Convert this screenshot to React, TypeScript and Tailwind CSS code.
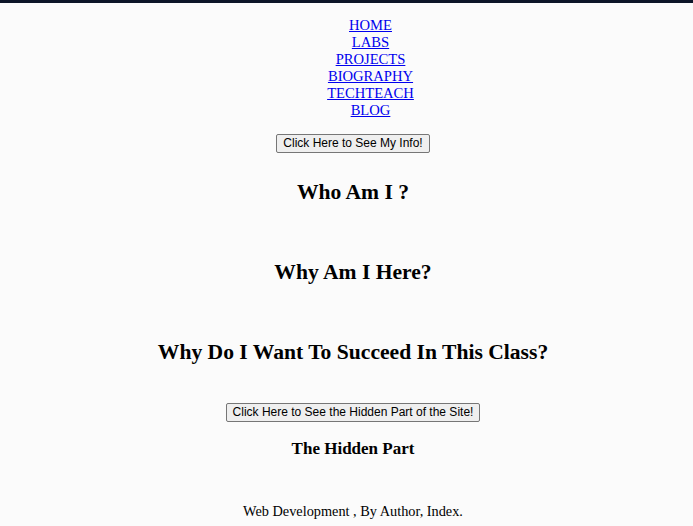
const links = ["HOME", "LABS", "PROJECTS", "BIOGRAPHY", "TECHTEACH", "BLOG"];

const questions = [
  "Who Am I ?",
  "Why Am I Here?",
  "Why Do I Want To Succeed In This Class?",
];

export default function App() {
  return (
    <div className="min-h-[526px] bg-[#fbfbfb] text-black font-['Liberation_Serif','Times_New_Roman',serif] text-[14.3px]">
      <div className="h-[3px] bg-[#0c1528]" />

      <div className="pl-[13px]">
        {/* nav list, indented like a ul */}
        <nav className="mt-[14px] pl-[35px] flex flex-col items-center leading-[17px] text-[14.6px]">
          {links.map((l) => (
            <a key={l} href="#" className="text-[#0000ee] underline">
              {l}
            </a>
          ))}
        </nav>

        <div className="flex flex-col items-center">
          <button className="mt-[15px] h-[19px] px-[6px] bg-[#efefef] border border-[#767676] rounded-[2px] font-['Liberation_Sans',Arial,sans-serif] text-[12px] leading-[17px] text-black">
            Click Here to See My Info!
          </button>

          <div className="mt-[27px] flex flex-col items-center gap-[56px]">
            {questions.map((q) => (
              <h2 key={q} className="text-[21.6px] font-bold leading-[24px]">
                {q}
              </h2>
            ))}
          </div>

          <button className="mt-[39px] h-[19px] px-[6px] bg-[#efefef] border border-[#767676] rounded-[2px] font-['Liberation_Sans',Arial,sans-serif] text-[12px] leading-[17px] text-black">
            Click Here to See the Hidden Part of the Site!
          </button>

          <h3 className="mt-[17px] text-[17px] font-bold leading-[19px]">
            The Hidden Part
          </h3>

          <footer className="mt-[45px] leading-[16px]">
            Web Development , By Author, Index.
          </footer>
        </div>
      </div>
    </div>
  );
}
